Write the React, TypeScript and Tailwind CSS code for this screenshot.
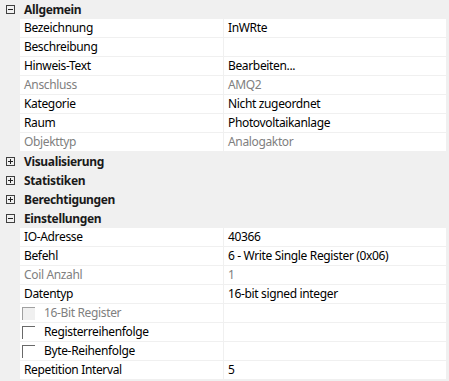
import React from "react";

type Row =
  | { kind: "header"; label: string; open: boolean }
  | { kind: "prop"; label: string; value?: string; disabled?: boolean }
  | { kind: "check"; label: string; disabled?: boolean };

const rows: Row[] = [
  { kind: "header", label: "Allgemein", open: true },
  { kind: "prop", label: "Bezeichnung", value: "InWRte" },
  { kind: "prop", label: "Beschreibung", value: "" },
  { kind: "prop", label: "Hinweis-Text", value: "Bearbeiten..." },
  { kind: "prop", label: "Anschluss", value: "AMQ2", disabled: true },
  { kind: "prop", label: "Kategorie", value: "Nicht zugeordnet" },
  { kind: "prop", label: "Raum", value: "Photovoltaikanlage" },
  { kind: "prop", label: "Objekttyp", value: "Analogaktor", disabled: true },
  { kind: "header", label: "Visualisierung", open: false },
  { kind: "header", label: "Statistiken", open: false },
  { kind: "header", label: "Berechtigungen", open: false },
  { kind: "header", label: "Einstellungen", open: true },
  { kind: "prop", label: "IO-Adresse", value: "40366" },
  { kind: "prop", label: "Befehl", value: "6 - Write Single Register (0x06)" },
  { kind: "prop", label: "Coil Anzahl", value: "1", disabled: true },
  { kind: "prop", label: "Datentyp", value: "16-bit signed integer" },
  { kind: "check", label: "16-Bit Register", disabled: true },
  { kind: "check", label: "Registerreihenfolge" },
  { kind: "check", label: "Byte-Reihenfolge" },
  { kind: "prop", label: "Repetition Interval", value: "5" },
];

function Expander({ open }: { open: boolean }) {
  return (
    <svg width="9" height="9" viewBox="0 0 9 9" className="block">
      <rect x="0.5" y="0.5" width="8" height="8" fill="none" stroke="#404040" strokeWidth="1" />
      <line x1="2" y1="4.5" x2="7" y2="4.5" stroke="#202020" strokeWidth="1" />
      {!open && <line x1="4.5" y1="2" x2="4.5" y2="7" stroke="#202020" strokeWidth="1" />}
    </svg>
  );
}

function CheckBox({ disabled }: { disabled?: boolean }) {
  return (
    <div
      className={
        "w-[13px] h-[13px] border-l border-t " +
        (disabled ? "border-[#a0a0a0] bg-[#f0f0f0]" : "border-[#696969] bg-white")
      }
    />
  );
}

export default function App() {
  return (
    <div
      className="w-[449px] h-[381px] bg-[#f0f0f0] overflow-hidden text-[12px] leading-[18px] tracking-[-0.35px] text-black"
      style={{ fontFamily: '"Noto Sans", "Open Sans", sans-serif' }}
    >
      {rows.map((r, i) => {
        if (r.kind === "header") {
          return (
            <div key={i} className="flex items-center h-[19px]">
              <div className="w-[20px] h-full flex items-center pl-[6px]">
                <Expander open={r.open} />
              </div>
              <div className="pl-[4px] font-bold text-[#1a1a1a]">{r.label}</div>
            </div>
          );
        }
        const gray = r.disabled ? "text-[#808080]" : "text-black";
        return (
          <div key={i} className="flex h-[19px] pl-[20px] pr-[3px]">
            <div className="flex w-full h-[18px] bg-white">
              <div className={"w-[203px] flex items-center pl-[4px] " + gray}>
                {r.kind === "check" ? (
                  <>
                    <div className="-ml-[2px]">
                      <CheckBox disabled={r.disabled} />
                    </div>
                    <span className="ml-[9px]">{r.label}</span>
                  </>
                ) : (
                  r.label
                )}
              </div>
              <div className="w-[1px] bg-[#f0f0f0]" />
              <div className={"flex-1 flex items-center pl-[4px] " + gray}>
                {r.kind === "prop" ? r.value : ""}
              </div>
            </div>
          </div>
        );
      })}
    </div>
  );
}
